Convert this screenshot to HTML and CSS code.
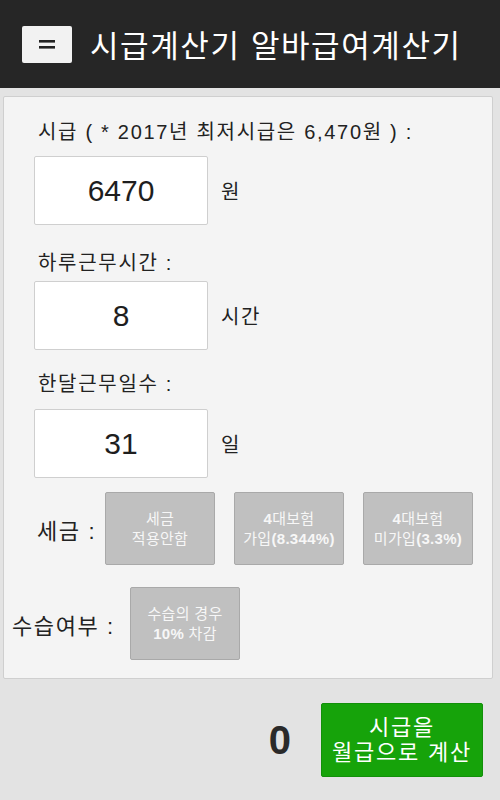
FILE: index.html
```html
<!DOCTYPE html>
<html lang="ko">
<head>
<meta charset="utf-8">
<link rel="stylesheet" href="styles.css">
</head>
<body>
<header class="topbar">
  <div class="menu-btn">
    <svg width="18" height="10" viewBox="0 0 18 10"><rect x="1" y="1" width="16" height="2.6" fill="#222"/><rect x="1" y="7" width="16" height="2.6" fill="#222"/></svg>
  </div>
  <h1 class="title">시급계산기 알바급여계산기</h1>
</header>
<main class="panel">
  <div class="group g1">
    <div class="field-label">시급 ( * 2017년 최저시급은 6,470원 ) :</div>
    <div class="input-row">
      <div class="input">6470</div>
      <span class="unit">원</span>
    </div>
  </div>
  <div class="group g2">
    <div class="field-label">하루근무시간 :</div>
    <div class="input-row">
      <div class="input">8</div>
      <span class="unit">시간</span>
    </div>
  </div>
  <div class="group g3">
    <div class="field-label">한달근무일수 :</div>
    <div class="input-row">
      <div class="input">31</div>
      <span class="unit">일</span>
    </div>
  </div>
  <div class="opt-row tax">
    <span class="opt-label">세금 :</span>
    <div class="opt-btn"><span>세금<br>적용안함</span></div>
    <div class="opt-btn"><span><b>4</b>대보험<br>가입<b>(8.344%)</b></span></div>
    <div class="opt-btn"><span><b>4</b>대보험<br>미가입<b>(3.3%)</b></span></div>
  </div>
  <div class="opt-row train">
    <span class="opt-label">수습여부 :</span>
    <div class="opt-btn"><span>수습의 경우<br><b>10%</b> 차감</span></div>
  </div>
</main>
<section class="result">
  <span class="amount">0</span>
  <div class="calc-btn"><span>시급을<br>월급으로 계산</span></div>
</section>
</body>
</html>
```
FILE: styles.css
```css
* { box-sizing: border-box; }
html, body { margin: 0; padding: 0; }
body {
  background: #e3e3e3;
  font-family: "Liberation Sans", "Noto Sans CJK KR", sans-serif;
  color: #222;
  width: 500px;
  height: 800px;
  overflow: hidden;
}
.topbar {
  height: 88px;
  background: #262626;
  display: flex;
  align-items: center;
  padding-left: 22px;
}
.menu-btn {
  width: 50px;
  height: 37px;
  background: #f2f2f2;
  border-radius: 2px;
  display: flex;
  align-items: center;
  justify-content: center;
}
.title {
  margin: 0 0 0 18px;
  color: #fff;
  font-weight: normal;
  font-size: 31px;
  letter-spacing: 1.6px;
  font-family: "Noto Sans CJK KR", sans-serif;
  line-height: 40px;
}
.panel {
  margin: 8px 7px 0 3px;
  background: #f4f4f4;
  border: 1px solid #cfcfcf;
  border-radius: 2px;
  padding: 21px 0 18px 30px;
}
.field-label {
  font-size: 20px;
  line-height: 28px;
  margin-left: 4px;
  color: #222;
  letter-spacing: 1.7px;
  white-space: nowrap;
}
.group.g2 { margin-top: 24px; }
.group.g3 { margin-top: 20px; }
.g1 .input-row { margin-top: 10px; }
.g2 .input-row { margin-top: 4px; }
.g3 .input-row { margin-top: 11px; }
.input-row {
  display: flex;
  align-items: center;
}
.input {
  width: 174px;
  height: 69px;
  background: #fff;
  border: 1px solid #cfcfcf;
  border-radius: 2px;
  display: flex;
  align-items: center;
  justify-content: center;
  font-size: 30px;
  color: #1e1e1e;
}
.unit {
  margin-left: 13px;
  font-size: 20px;
  color: #222;
  letter-spacing: 1.5px;
}
.opt-row {
  display: flex;
  align-items: center;
}
.opt-row.tax { margin-top: 14px; margin-left: 3px; }
.opt-row.train { margin-top: 22px; margin-left: -22px; }
.opt-label {
  font-size: 22px;
  color: #222;
  white-space: nowrap;
  letter-spacing: 1.6px;
}
.tax .opt-label { width: 68px; }
.train .opt-label { width: 118px; }
.opt-btn {
  width: 110px;
  height: 73px;
  background: #c0c0c0;
  border: 1px solid #a9a9a9;
  border-radius: 2px;
  color: #f7f7f7;
  font-size: 15px;
  line-height: 20px;
  text-align: center;
  display: flex;
  align-items: center;
  justify-content: center;
  letter-spacing: 0.3px;
  margin-right: 19px;
  white-space: nowrap;
}
.opt-btn b { font-weight: bold; }
.result {
  display: flex;
  justify-content: flex-end;
  align-items: center;
  margin-top: 24px;
  padding-right: 17px;
}
.amount {
  font-size: 40px;
  font-weight: bold;
  color: #2a2a2a;
  margin-right: 30px;
}
.calc-btn {
  width: 162px;
  height: 74px;
  background: #16a30a;
  border: 1px solid #12900a;
  border-radius: 2px;
  color: #fff;
  font-size: 22px;
  line-height: 25px;
  text-align: center;
  display: flex;
  align-items: center;
  justify-content: center;
  letter-spacing: 1.8px;
  white-space: nowrap;
}
```
